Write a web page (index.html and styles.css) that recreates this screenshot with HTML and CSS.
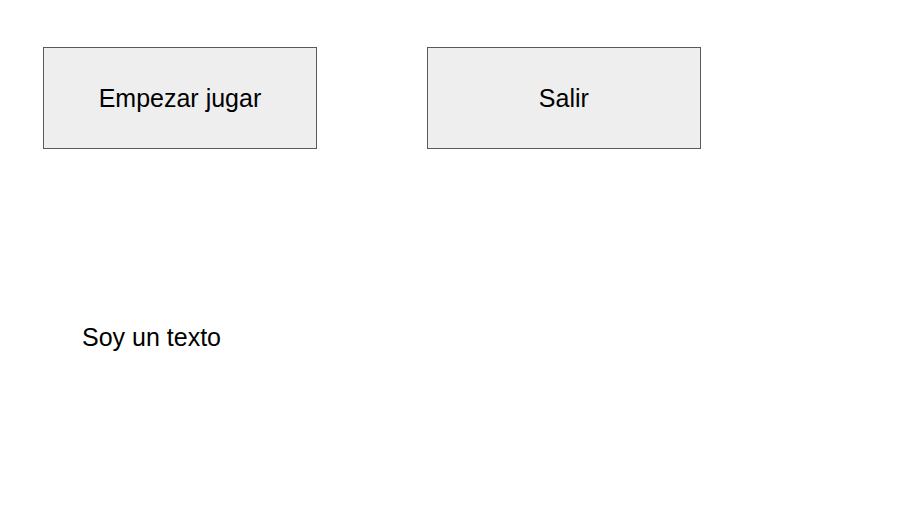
FILE: index.html
```html
<!DOCTYPE html>
<html lang="es">
<head>
  <meta charset="utf-8">
  <meta name="viewport" content="width=device-width, initial-scale=1">
  <title>Juego</title>
  <link rel="stylesheet" href="styles.css">
</head>
<body>
  <main class="screen">
    <div class="actions">
      <button class="action" type="button">Empezar jugar</button>
      <button class="action" type="button">Salir</button>
    </div>
    <p class="message">Soy un texto</p>
  </main>
</body>
</html>
```

FILE: styles.css
```css
* {
  box-sizing: border-box;
}

body {
  margin: 0;
  background: #fff;
  color: #000;
  font: 25px/28px "Liberation Sans", Arial, sans-serif;
}

.screen {
  padding: 47px 43px;
}

.actions {
  display: flex;
  flex-wrap: wrap;
  gap: 24px 110px;
}

.action {
  flex: 0 1 33%;
  padding: 36px 16px;
  border: 1px solid #595959;
  background: #eee;
  color: inherit;
  font: inherit;
}

.message {
  margin: 174px 39px 0;
}
```
